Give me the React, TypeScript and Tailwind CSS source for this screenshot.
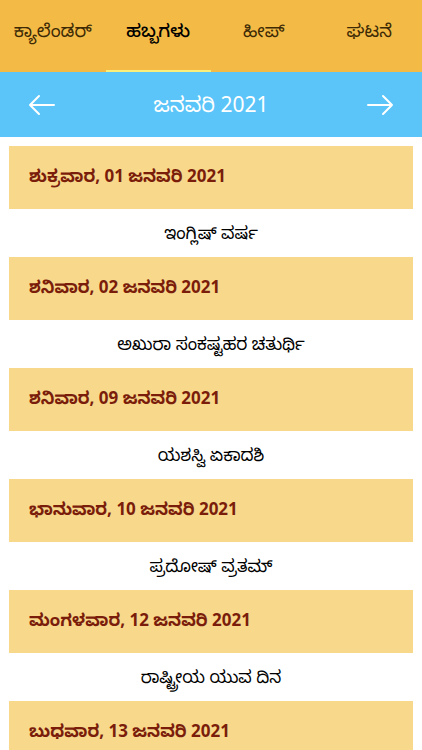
const tabs = ['ಕ್ಯಾಲೆಂಡರ್', 'ಹಬ್ಬಗಳು', 'ಹೀಪ್', 'ಘಟನೆ']

const festivals = [
  { date: 'ಶುಕ್ರವಾರ, 01 ಜನವರಿ 2021', name: 'ಇಂಗ್ಲಿಷ್ ವರ್ಷ' },
  { date: 'ಶನಿವಾರ, 02 ಜನವರಿ 2021', name: 'ಅಖುರಾ ಸಂಕಷ್ಟಹರ ಚತುರ್ಥಿ' },
  { date: 'ಶನಿವಾರ, 09 ಜನವರಿ 2021', name: 'ಯಶಸ್ವಿ ಏಕಾದಶಿ' },
  { date: 'ಭಾನುವಾರ, 10 ಜನವರಿ 2021', name: 'ಪ್ರದೋಷ್ ವ್ರತಮ್' },
  { date: 'ಮಂಗಳವಾರ, 12 ಜನವರಿ 2021', name: 'ರಾಷ್ಟ್ರೀಯ ಯುವ ದಿನ' },
  { date: 'ಬುಧವಾರ, 13 ಜನವರಿ 2021', name: 'ಮಕರ ಸಂಕ್ರಾಂತಿ' },
]

function Arrow({ dir }: { dir: 'left' | 'right' }) {
  return (
    <svg width="28" height="24" viewBox="0 0 28 24" fill="none" stroke="white" strokeWidth={2} strokeLinecap="round" strokeLinejoin="round">
      {dir === 'left' ? (
        <path d="M26 12H2M11 3l-9 9 9 9" />
      ) : (
        <path d="M2 12h24M17 3l9 9-9 9" />
      )}
    </svg>
  )
}

export default function App() {
  return (
    <div className="w-[422px] h-[750px] overflow-hidden bg-white" style={{ fontFamily: '"Noto Sans", "Noto Sans Kannada", Roboto, sans-serif' }}>
      {/* tabs */}
      <div className="h-[72px] bg-[#f3bb45] flex">
        {tabs.map((t, i) => (
          <div key={t} className="flex-1 flex flex-col">
            <div className={`flex-1 flex items-center justify-center pb-[10px] text-[18px] ${i === 1 ? 'text-black font-medium' : 'text-[#3d2a05]'}`}>
              {t}
            </div>
            <div className={`h-[2px] ${i === 1 ? 'bg-[#fbef7a]' : ''}`} />
          </div>
        ))}
      </div>

      {/* month bar */}
      <div className="h-[65px] bg-[#5bc5f9] flex items-center justify-between px-[28px]">
        <Arrow dir="left" />
        <span className="text-white text-[21px]">ಜನವರಿ 2021</span>
        <Arrow dir="right" />
      </div>

      {/* list */}
      <div className="px-[9px] pt-[9px] flex flex-col">
        {festivals.map((f) => (
          <div key={f.date} className="flex flex-col">
            <div className="h-[63px] bg-[#f8d98c] flex items-center px-[20px] pb-[3px] text-[17px] font-bold text-[#7b1d0b]">
              {f.date}
            </div>
            <div className="h-[48px] flex items-center justify-center text-[17px] text-black">
              {f.name}
            </div>
          </div>
        ))}
      </div>
    </div>
  )
}
